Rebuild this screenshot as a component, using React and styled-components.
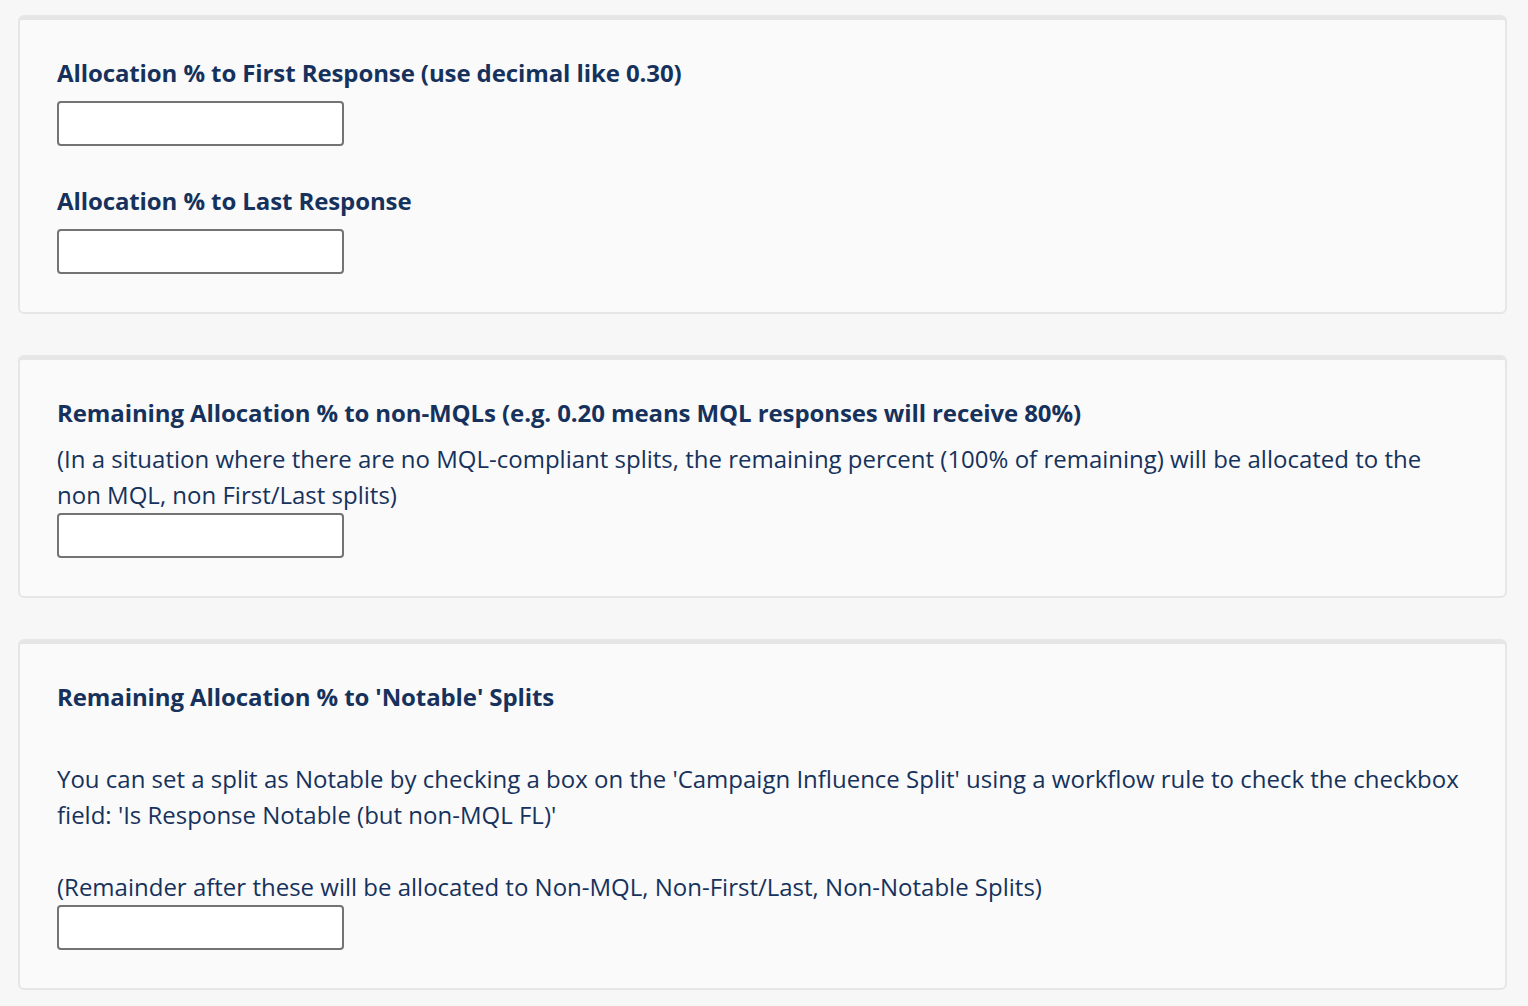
import styled, { createGlobalStyle } from "styled-components";

const GlobalStyle = createGlobalStyle`
  body {
    margin: 0;
    background: #f7f7f7;
    font-family: "Open Sans", Lato, sans-serif;
    color: #16325c;
  }
`;

const Page = styled.div`
  display: flex;
  flex-direction: column;
  gap: 41px;
  padding: 15px 21px 16px 18px;
`;

const Card = styled.section`
  background: #fafafa;
  border: 2px solid #e6e6e6;
  border-top-width: 5px;
  border-radius: 6px;
  padding: 35px 37px 38px;
`;

const Label = styled.div`
  font-size: 24px;
  font-weight: 700;
  line-height: 36px;
  letter-spacing: -0.1px;
  margin-bottom: ${(p) => (p.$gap ? p.$gap : 10)}px;
`;

const Text = styled.p`
  margin: 0;
  font-size: 24px;
  line-height: 36px;
`;

const Input = styled.input`
  display: block;
  box-sizing: border-box;
  width: 287px;
  height: 45px;
  border: 2px solid #737373;
  border-radius: 4px;
  background: #fff;
  margin-bottom: ${(p) => (p.$last ? 0 : 37)}px;
`;

export default function App() {
  return (
    <>
      <GlobalStyle />
      <Page>
        <Card>
          <Label>Allocation % to First Response (use decimal like 0.30)</Label>
          <Input />
          <Label>Allocation % to Last Response</Label>
          <Input $last />
        </Card>
        <Card>
          <Label>Remaining Allocation % to non-MQLs (e.g. 0.20 means MQL responses will receive 80%)</Label>
          <Text>
            (In a situation where there are no MQL-compliant splits, the remaining percent (100% of remaining) will be allocated to the non MQL, non First/Last splits)
          </Text>
          <Input $last />
        </Card>
        <Card>
          <Label $gap={46}>Remaining Allocation % to 'Notable' Splits</Label>
          <Text>
            You can set a split as Notable by checking a box on the 'Campaign Influence Split' using a workflow rule to check the checkbox field: 'Is Response Notable (but non-MQL FL)'
          </Text>
          <Text>&nbsp;</Text>
          <Text>(Remainder after these will be allocated to Non-MQL, Non-First/Last, Non-Notable Splits)</Text>
          <Input $last />
        </Card>
      </Page>
    </>
  );
}
